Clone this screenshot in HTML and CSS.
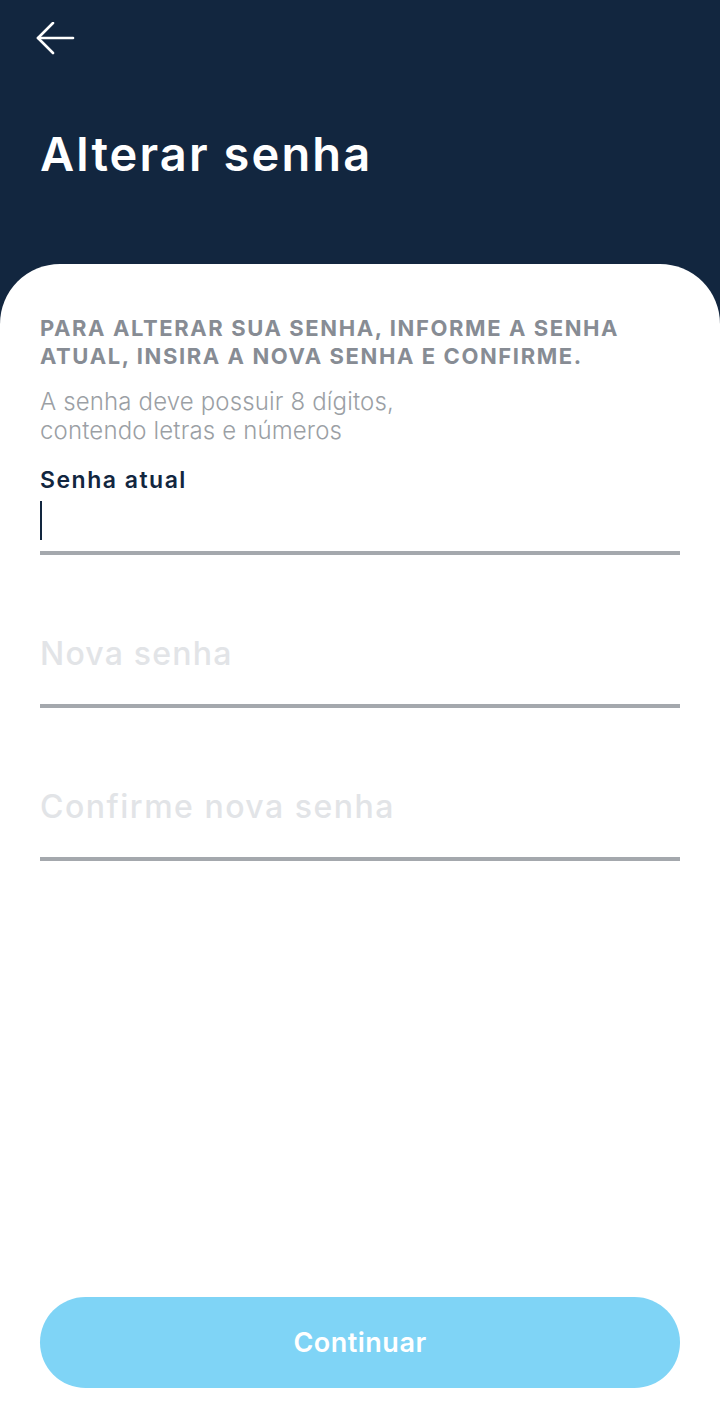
FILE: index.html
```html
<!DOCTYPE html>
<html lang="pt-BR">
<head>
<meta charset="utf-8">
<title>Alterar senha</title>
<link rel="stylesheet" href="styles.css">
</head>
<body>
<div class="screen">
  <header class="top">
    <button class="back" aria-label="Voltar">
      <svg width="40" height="34" viewBox="0 0 40 34" fill="none" stroke="#fff" stroke-width="2.6" stroke-linecap="round" stroke-linejoin="round">
        <path d="M2 16 H37"/>
        <path d="M17 1 L2 16 L17 31"/>
      </svg>
    </button>
    <h1 class="title">Alterar senha</h1>
  </header>
  <main class="card">
    <p class="lead">PARA ALTERAR SUA SENHA, INFORME A SENHA ATUAL, INSIRA A NOVA SENHA E CONFIRME.</p>
    <p class="hint">A senha deve possuir 8 dígitos,<br>contendo letras e números</p>
    <div class="field active">
      <label class="label">Senha atual</label>
      <div class="input"><span class="caret"></span></div>
    </div>
    <div class="field">
      <div class="input"><span class="placeholder">Nova senha</span></div>
    </div>
    <div class="field">
      <div class="input"><span class="placeholder wide">Confirme nova senha</span></div>
    </div>
    <div class="spacer"></div>
    <button class="cta">Continuar</button>
  </main>
</div>
</body>
</html>
```

FILE: styles.css
```css
* { box-sizing: border-box; }
html, body { margin: 0; padding: 0; }
body {
  width: 720px;
  height: 1426px;
  background: #12263f;
  font-family: "Inter", "Open Sans", sans-serif;
  overflow: hidden;
}
.screen {
  display: flex;
  flex-direction: column;
  height: 1426px;
}
.top {
  height: 264px;
  padding: 22px 40px 0 36px;
  display: flex;
  flex-direction: column;
}
.back {
  width: 40px;
  height: 34px;
  padding: 0;
  border: 0;
  background: none;
  display: block;
}
.back svg { display: block; }
.title {
  margin: 68px 0 0 4px;
  color: #fff;
  font-size: 47px;
  font-weight: 600;
  letter-spacing: 2.1px;
  line-height: 60px;
}
.card {
  flex: 1;
  background: #fff;
  border-radius: 60px 60px 0 0;
  padding: 50px 40px 38px;
  display: flex;
  flex-direction: column;
}
.lead {
  margin: 0;
  max-width: 600px;
  color: #878c94;
  font-size: 22px;
  font-weight: 700;
  line-height: 28px;
  letter-spacing: 1.6px;
}
.hint {
  margin: 17px 0 0;
  color: #9b9fa5;
  font-size: 24px;
  font-weight: 300;
  line-height: 29px;
  letter-spacing: 0.15px;
}
.field .label {
  display: block;
  margin-top: 20px;
  color: #12263f;
  font-size: 23px;
  font-weight: 600;
  line-height: 30px;
  letter-spacing: 1.5px;
}
.input {
  height: 73px;
  border-bottom: 4px solid #a4a8ad;
  display: flex;
  align-items: flex-start;
}
.field.active .input {
  height: 60px;
  padding-top: 6px;
}
.caret {
  width: 2px;
  height: 39px;
  background: #12263f;
}
.field + .field { margin-top: 80px; }
.placeholder {
  color: #e2e4e7;
  font-size: 32px;
  font-weight: 500;
  line-height: 38px;
  letter-spacing: 1.2px;
}
.placeholder.wide { letter-spacing: 1.5px; }
.spacer { flex: 1; }
.cta {
  height: 91px;
  border: 0;
  border-radius: 46px;
  background: #7fd4f6;
  color: #fff;
  font-family: "Inter", "Open Sans", sans-serif;
  font-size: 27px;
  font-weight: 600;
  letter-spacing: 0.5px;
}
```
